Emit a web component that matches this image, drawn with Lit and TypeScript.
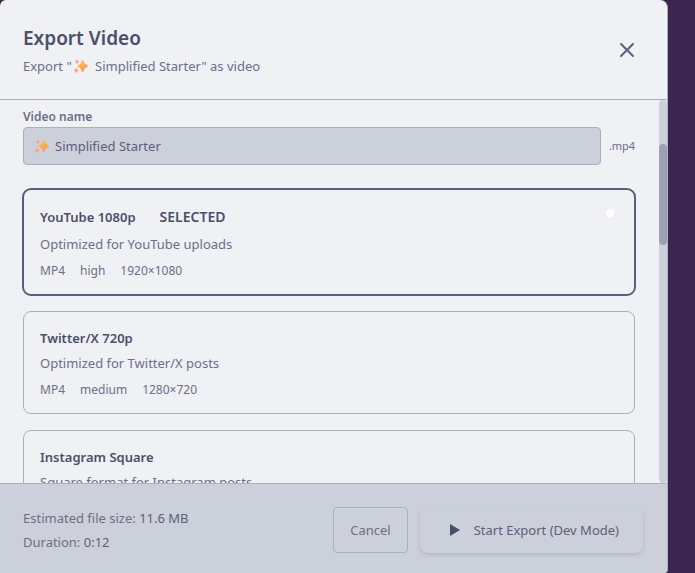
import { LitElement, html, css, svg, nothing } from "lit";
import { customElement, state } from "lit/decorators.js";

interface Preset {
  id: string;
  name: string;
  description: string;
  quality: string;
  size: string;
}

const PRESETS: Preset[] = [
  { id: "youtube", name: "YouTube 1080p", description: "Optimized for YouTube uploads", quality: "high", size: "1920×1080" },
  { id: "twitter", name: "Twitter/X 720p", description: "Optimized for Twitter/X posts", quality: "medium", size: "1280×720" },
  { id: "instagram", name: "Instagram Square", description: "Square format for Instagram posts", quality: "high", size: "1080×1080" },
];

const sparkles = html`<svg class="sparkles" viewBox="0 0 16 16" role="img" aria-label="sparkles">
  <defs>
    <linearGradient id="glow" x1="0" y1="0" x2="0.6" y2="1">
      <stop offset="0" stop-color="#fdc94f" />
      <stop offset="1" stop-color="#f9985c" />
    </linearGradient>
  </defs>
  ${svg`<path fill="url(#glow)" stroke="url(#glow)" stroke-width="1" stroke-linejoin="round" d="M9.6 2 Q10.6 6.600 14.800 8 Q10.6 9.400 9.600 14 Q8.600 9.400 4.600 8 Q8.600 6.600 9.600 2Z"/>
  <path fill="#f8a58c" d="M4 1 Q4.400 3.200 6.400 3.700 Q4.400 4.200 4 6.400 Q3.600 4.200 1.600 3.700 Q3.600 3.200 4 1Z"/>
  <path fill="#f8a078" d="M3.200 9.600 Q3.600 12 5.800 12.500 Q3.600 13 3.200 15.400 Q2.800 13 .6 12.500 Q2.800 12 3.200 9.600Z"/>`}
</svg>`;

@customElement("app-root")
export class AppRoot extends LitElement {
  @state() private selected = "youtube";

  static styles = css`
    :host {
      display: block;
      height: 100vh;
      padding-right: 27px;
      box-sizing: border-box;
      background: #3b2650;
      font-family: "Noto Sans", "Open Sans", sans-serif;
      font-size: 13px;
      line-height: 20px;
      color: #6c6f85;
    }
    * { box-sizing: border-box; }
    h1, p { margin: 0; }
    button, input { font: inherit; color: inherit; }
    .dialog {
      display: flex;
      flex-direction: column;
      height: 100%;
      overflow: hidden;
      background: #eff1f5;
      border-right: 1px solid #acb0be;
      border-radius: 6px 8px 4px 0;
    }
    .header {
      display: flex;
      align-items: center;
      justify-content: space-between;
      padding: 22px 24px 21px 23px;
      border-bottom: 1px solid #acb0be;
    }
    .title {
      font-size: 19px;
      line-height: 32px;
      font-weight: 600;
      color: #4c4f69;
    }
    .subtitle { line-height: 24px; }
    .sparkles {
      width: 16px;
      height: 16px;
      flex: none;
      vertical-align: -3px;
    }
    .subtitle .sparkles { margin: 0 3px 0 1px; }
    .close {
      display: grid;
      place-items: center;
      width: 32px;
      height: 32px;
      padding: 0;
      border: 0;
      background: none;
      color: #5c5f77;
    }
    .close svg { width: 16px; height: 16px; }
    .body {
      flex: 1;
      min-height: 0;
      display: flex;
    }
    .content {
      flex: 1;
      min-width: 0;
      overflow: hidden;
      padding: 7px 24px 0 23px;
    }
    .track {
      flex: none;
      width: 8px;
      border-radius: 4px;
      background: #ccd0da;
      padding-top: 44px;
    }
    .thumb {
      height: 101px;
      border-radius: 4px;
      background: #9ca0b0;
    }
    .field-label {
      display: block;
      font-size: 12px;
      font-weight: 600;
    }
    .field {
      display: flex;
      align-items: center;
      gap: 8px;
      margin-bottom: 24px;
    }
    .box {
      flex: 1;
      display: flex;
      align-items: center;
      gap: 5px;
      height: 38px;
      padding: 0 10px;
      border: 1px solid #acb0be;
      border-radius: 4px;
      background: #ccd0da;
      color: #5c5f77;
    }
    .name {
      flex: 1;
      min-width: 0;
      border: 0;
      padding: 0;
      outline: 0;
      background: none;
    }
    .ext { font-size: 11px; }
    .presets {
      display: flex;
      flex-direction: column;
      gap: 16px;
      margin: 0;
      padding: 0;
      border: 0;
    }
    .card {
      display: block;
      position: relative;
      padding: 15px 16px 14px;
      border: 1px solid #acb0be;
      border-radius: 8px;
    }
    .card.selected {
      margin: -1px;
      border: 2px solid #5c5f77;
      border-radius: 9px;
    }
    .radio {
      appearance: none;
      position: absolute;
      top: 13px;
      right: 14px;
      width: 20px;
      height: 20px;
      margin: 0;
      display: grid;
      place-items: center;
    }
    .radio:checked::before {
      content: "";
      width: 8px;
      height: 8px;
      border-radius: 50%;
      background: #fff;
    }
    .heading {
      display: flex;
      align-items: baseline;
      gap: 12px;
      padding: 1px 0;
      margin-bottom: 4px;
      font-weight: 600;
      color: #4c4f69;
    }
    .badge {
      padding: 1px 12px 2px;
      font-size: 14px;
    }
    .description { display: block; margin-bottom: 8px; }
    .meta {
      display: flex;
      gap: 15px;
      font-size: 12px;
      line-height: 18px;
    }
    .footer {
      display: flex;
      align-items: center;
      justify-content: space-between;
      padding: 22px 24px 19px 23px;
      border-top: 1px solid #acb0be;
      background: #ccd0da;
    }
    .summary { line-height: 24px; }
    .value { color: #5c5f77; }
    .actions { display: flex; gap: 12px; }
    .button {
      display: flex;
      align-items: center;
      height: 46px;
      border-radius: 4px;
      background: none;
    }
    .cancel {
      padding: 0 16px;
      border: 1px solid #acb0be;
    }
    .start {
      gap: 10px;
      padding: 0 24px 0 28px;
      border: 0;
      border-radius: 8px;
      background: #ccd0da;
      box-shadow: 0 2px 4px rgba(76, 79, 105, 0.2);
      color: #5c5f77;
    }
    .start svg { width: 16px; height: 14px; fill: #4c4f69; }
  `;

  render() {
    return html`
      <main class="dialog">
        <header class="header">
          <div>
            <h1 class="title">Export Video</h1>
            <p class="subtitle">Export "${sparkles} Simplified Starter" as video</p>
          </div>
          <button class="close" type="button" aria-label="Close">
            <svg viewBox="0 0 16 16" fill="none" stroke="currentColor" stroke-width="2" stroke-linecap="round">
              <path d="M2 2l12 12M14 2L2 14" />
            </svg>
          </button>
        </header>
        <div class="body">
          <div class="content">
            <label class="field-label" for="name">Video name</label>
            <div class="field">
              <div class="box">
                ${sparkles}
                <input class="name" id="name" type="text" value="Simplified Starter" />
              </div>
              <span class="ext">.mp4</span>
            </div>
            <fieldset class="presets" aria-label="Preset">
              ${PRESETS.map((p) => this.renderPreset(p))}
            </fieldset>
          </div>
          <div class="track"><div class="thumb"></div></div>
        </div>
        <footer class="footer">
          <div class="summary">
            <p>Estimated file size: <span class="value">11.6 MB</span></p>
            <p>Duration: <span class="value">0:12</span></p>
          </div>
          <div class="actions">
            <button class="button cancel" type="button">Cancel</button>
            <button class="button start" type="button">
              <svg viewBox="0 0 16 14"><path d="M2 1L12 7L2 13Z" /></svg>
              Start Export (Dev Mode)
            </button>
          </div>
        </footer>
      </main>
    `;
  }

  private renderPreset(p: Preset) {
    const on = p.id === this.selected;
    return html`
      <label class="card ${on ? "selected" : ""}">
        <input class="radio" type="radio" name="preset" .checked=${on} @change=${() => (this.selected = p.id)} />
        <span class="heading">${p.name}${on ? html`<span class="badge">SELECTED</span>` : nothing}</span>
        <span class="description">${p.description}</span>
        <span class="meta"><span>MP4</span><span>${p.quality}</span><span>${p.size}</span></span>
      </label>
    `;
  }
}
